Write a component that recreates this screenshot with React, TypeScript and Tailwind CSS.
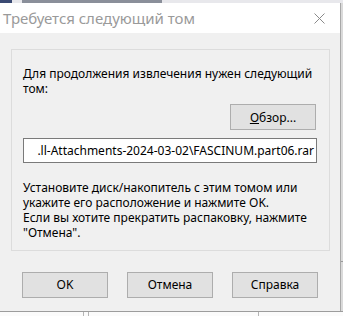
const ui = { fontFamily: '"Noto Sans", "Open Sans", sans-serif' };

function Btn({ children }: { children: React.ReactNode }) {
  return (
    <button className="flex h-[26px] w-[86px] items-center justify-center border border-[#adadad] bg-[#e1e1e1] text-[12px] text-black">
      {children}
    </button>
  );
}

export default function App() {
  return (
    <div className="flex h-[316px] w-[343px] flex-col overflow-hidden bg-[#f3f3f3]" style={ui}>
      {/* полоска окна позади */}
      <div className="flex h-[3px] shrink-0 bg-[#e8e8ec]">
        <div className="w-[12px] bg-[#3b4a73]" />
        <div className="ml-[10px] w-[140px] bg-[#8a8f9a]" />
      </div>

      <div className="flex h-[308px] shrink-0">
        {/* диалог */}
        <div className="flex w-[341px] flex-col border-r border-[#a8a8a8] bg-[#f0f0f0]">
          <div className="flex h-[30px] shrink-0 items-center justify-between bg-white pl-[3px] pr-[15px]">
            <span className="text-[15px] text-[#9a9a9a] leading-none">Требуется следующий том</span>
            <svg width="11" height="11" viewBox="0 0 11 11" className="mr-[0px]">
              <path d="M0.5 0.5 L10.5 10.5 M10.5 0.5 L0.5 10.5" stroke="#8a8a8a" strokeWidth="1" fill="none" />
            </svg>
          </div>

          <div className="ml-[11px] mt-[16px] flex h-[202px] w-[319px] flex-col border border-[#dcdcdc] px-[11px] pt-[16px] text-[12px] leading-[15px] text-black">
            <p className="w-[300px]">Для продолжения извлечения нужен следующий том:</p>
            <div className="mt-[8px] flex justify-end pr-[2px]">
              <Btn>
                <span>
                  <span className="underline">О</span>бзор...
                </span>
              </Btn>
            </div>
            <div className="mt-[8px] flex h-[25px] w-[294px] items-center justify-end overflow-hidden border border-[#7a7a7a] bg-white px-[2px]">
              <span className="whitespace-nowrap">.ll-Attachments-2024-03-02\FASCINUM.part06.rar</span>
            </div>
            <p className="mt-[17px]">
              Установите диск/накопитель с этим томом или
              <br />
              укажите его расположение и нажмите OK.
              <br />
              Если вы хотите прекратить распаковку, нажмите
              <br />
              "Отмена".
            </p>
          </div>

          <div className="ml-[22px] mt-[21px] flex gap-[19px]">
            <Btn>OK</Btn>
            <Btn>Отмена</Btn>
            <Btn>Справка</Btn>
          </div>
        </div>
        <div className="flex w-[2px] flex-col bg-[#dadada]">
          <div className="mt-[258px] h-px bg-[#9a9a9a]" />
        </div>
      </div>

      {/* фон снизу */}
      <div className="flex flex-1 border-t border-[#9c9c9c] bg-[#fbfbfb]">
        <div className="ml-[83px] w-px bg-[#b5b5b5]" />
        <div className="ml-[4px] w-px bg-[#b5b5b5]" />
        <div className="ml-[169px] w-px bg-[#b5b5b5]" />
      </div>
    </div>
  );
}
